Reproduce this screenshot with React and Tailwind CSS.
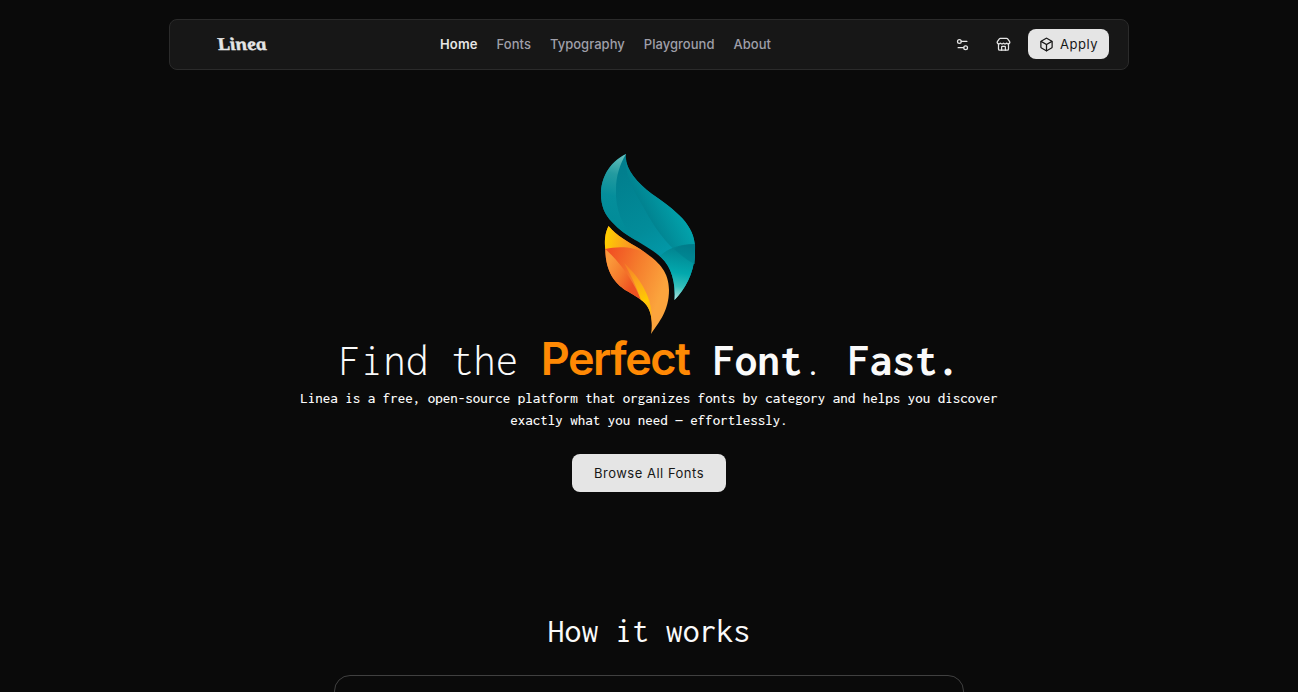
import React from "react";
import { Settings2, Store, Box } from "lucide-react";

const links = ["Fonts", "Typography", "Playground", "About"];

function Flame() {
  return (
    <svg viewBox="0 0 120 190" className="h-[190px] w-[120px]" aria-hidden="true">
      <defs>
        <linearGradient id="tealEdge" gradientUnits="userSpaceOnUse" x1="36" y1="9" x2="18" y2="80">
          <stop offset="0" stopColor="#6cc4c0" />
          <stop offset="0.3" stopColor="#249ba0" />
          <stop offset="0.6" stopColor="#058e9b" />
          <stop offset="1" stopColor="#018b98" />
        </linearGradient>
        <linearGradient id="tealMid" gradientUnits="userSpaceOnUse" x1="28" y1="30" x2="85" y2="125">
          <stop offset="0" stopColor="#017f8e" />
          <stop offset="0.55" stopColor="#028c9a" />
          <stop offset="1" stopColor="#03a0b0" />
        </linearGradient>
        <linearGradient id="tealBack" gradientUnits="userSpaceOnUse" x1="56" y1="80" x2="92" y2="62">
          <stop offset="0" stopColor="#017d8b" />
          <stop offset="1" stopColor="#02a5ae" />
        </linearGradient>
        <linearGradient id="tealTip" gradientUnits="userSpaceOnUse" x1="94" y1="101" x2="86" y2="155">
          <stop offset="0" stopColor="#017f8c" />
          <stop offset="0.5" stopColor="#02a8ad" />
          <stop offset="0.75" stopColor="#35bfbb" />
          <stop offset="1" stopColor="#b5e5df" />
        </linearGradient>
        <linearGradient id="yellow" gradientUnits="userSpaceOnUse" x1="16" y1="94" x2="55" y2="104">
          <stop offset="0" stopColor="#ffce00" />
          <stop offset="0.45" stopColor="#fba61b" />
          <stop offset="1" stopColor="#f4792d" />
        </linearGradient>
        <linearGradient id="orange" gradientUnits="userSpaceOnUse" x1="20" y1="108" x2="78" y2="130">
          <stop offset="0" stopColor="#f15123" />
          <stop offset="0.5" stopColor="#f57e2d" />
          <stop offset="1" stopColor="#fba43d" />
        </linearGradient>
        <linearGradient id="orangeEdge" gradientUnits="userSpaceOnUse" x1="16" y1="122" x2="44" y2="138">
          <stop offset="0" stopColor="#fa993a" />
          <stop offset="0.5" stopColor="#f57b2d" />
          <stop offset="1" stopColor="#ee5222" />
        </linearGradient>
        <linearGradient id="goldRibbon" gradientUnits="userSpaceOnUse" x1="34" y1="118" x2="62" y2="178">
          <stop offset="0" stopColor="#f47a28" />
          <stop offset="0.35" stopColor="#fba81b" />
          <stop offset="0.65" stopColor="#ffcb00" />
          <stop offset="1" stopColor="#fba030" />
        </linearGradient>
      </defs>
      <path d="M36 9C18 18 11 34 11 49C11 61 15 70 22 77C34 90 50 97 63 106C78 116 86 130 84.500 155C96 143 105 127 105 105C106 80 86 66 62 49C46 37 34 22 36 9Z" fill="url(#tealMid)" />
      <path d="M36 9C18 18 11 34 11 49C11 61 15 70 22 77C29 85 38 91 47 96C32 82 25 64 26 44C26 31 30 19 36 9Z" fill="url(#tealEdge)" />
      <path d="M36 9C34 22 46 37 62 49C86 66 106 80 105 105L104.500 119C82 108 65 84 55 65C45 47 33 30 36 9Z" fill="url(#tealBack)" />
      <path d="M70 111C78 103 90 99 105 99C106 126 96 143 84.500 155C86 136 80 119 70 111Z" fill="url(#tealTip)" />
      <path d="M84 104C91 110 98 116 104.500 119L105 99C97 99 90 101 84 104Z" fill="#017b89" opacity=".45" />
      <path d="M18.500 81C14.500 89 14.500 97 15.300 104C15.500 129 27 140 37 146C47 152 59 157 61 171C62 178 62 184 61 189C69 177 79 166 79 145C79 124 65 114 50 104C38 97 26 90 18.500 81Z" fill="url(#orange)" />
      <path d="M18.500 81C14.500 89 14.500 97 15.300 104C28 101 43 101 57 109L50 104C38 97 26 90 18.500 81Z" fill="url(#yellow)" />
      <path d="M15.300 104C15.500 129 27 140 37 146C42 149 47 152 51 155C45 139 32 119 15.300 104Z" fill="url(#orangeEdge)" />
      <path d="M34 118C51 134 63 153 62 178C61 165 57 159 51 155C47 143 41 130 34 118Z" fill="url(#goldRibbon)" />
    </svg>
  );
}

export default function App() {
  return (
    <div className="flex h-[692px] flex-col items-center overflow-hidden bg-[#0a0a0a] font-['Inter',sans-serif] text-[#fafafa]">
      <header className="mt-[19px] grid h-[51px] w-[960px] shrink-0 grid-cols-[270px_1fr_200px] items-center rounded-lg border border-[#2b2b2b] bg-[#171717] pr-[19px]">
        <div className="mb-[2px] flex pl-[47px]">
          <span className="origin-left skew-x-[15deg] scale-x-[1.14] font-['Liberation_Serif',serif] text-[18px] font-bold italic leading-6 text-[#e5e5e5] [-webkit-text-stroke:0.4px_#e5e5e5]">
            Linea
          </span>
        </div>
        <nav className="flex items-center gap-[19px] text-[13px] font-medium tracking-[0.03px] text-[#9f9fa9]">
          <a className="font-semibold tracking-[0.15px] text-[#e5e5e5]">Home</a>
          {links.map((l) => (
            <a key={l}>{l}</a>
          ))}
        </nav>
        <div className="flex items-center justify-end text-[#e5e5e5]">
          <Settings2 size={15} strokeWidth={2} className="mr-[26px]" />
          <Store size={15} strokeWidth={2} className="mr-[17px]" />
          <button className="mb-px flex h-[30px] w-[81px] items-center justify-center gap-[6px] rounded-lg bg-[#e5e5e5] pt-px text-[13px] tracking-[0.5px] text-[#171717]">
            <Box size={15} strokeWidth={2} />
            Apply
          </button>
        </div>
      </header>

      <main className="flex w-full flex-col items-center">
        <div className="ml-[2px] mt-[75px] h-[190px] w-[120px]">
          <Flame />
        </div>
        <h1 className="flex h-[48px] items-baseline justify-center whitespace-pre font-['Inconsolata','Liberation_Mono',monospace] text-[45px] leading-[48px]">
          <span className="font-light">Find the </span>
          <span className="w-[149px] font-['Inter',sans-serif] text-[45px] font-semibold tracking-[-1.5px] text-[#ff8904]">Perfect</span>
          <span className="font-bold"> Font</span>
          <span className="font-light">. </span>
          <span className="font-bold">Fast.</span>
        </h1>
        <p className="mt-1 text-center font-['Inconsolata','Liberation_Mono',monospace] text-[15px] font-medium leading-[22px]">
          Linea is a free, open-source platform that organizes fonts by category and helps you discover
          <br />
          exactly what you need — effortlessly.
        </p>
        <button className="mt-[23px] h-[38px] w-[154px] rounded-lg bg-[#e5e5e5] pt-[2px] text-[13px] tracking-[0.5px] text-[#171717]">
          Browse All Fonts
        </button>
        <h2 className="mt-[119px] h-[40px] whitespace-pre font-['Inconsolata','Liberation_Mono',monospace] text-[33.75px] leading-[40px]">
          How it works
        </h2>
        <section className="mt-6 h-20 w-[630px] rounded-2xl border border-[#404040]" />
      </main>
    </div>
  );
}
